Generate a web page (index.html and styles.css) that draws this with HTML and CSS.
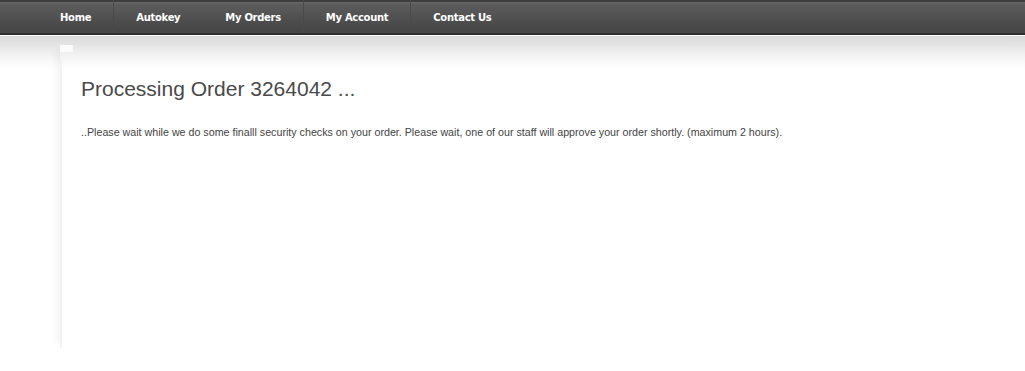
FILE: index.html
```html
<!DOCTYPE html>
<html>
<head>
<meta charset="utf-8">
<link rel="stylesheet" href="styles.css">
</head>
<body>
<div class="nav">
  <ul class="menu">
    <li class="item sep">Home</li>
    <li class="item">Autokey</li>
    <li class="item sep">My Orders</li>
    <li class="item sep">My Account</li>
    <li class="item">Contact Us</li>
  </ul>
</div>
<div class="page">
  <div class="content">
    <h1 class="title">Processing Order 3264042 ...</h1>
    <p class="msg">..Please wait while we do some finalll security checks on your order. Please wait, one of our staff will approve your order shortly. (maximum 2 hours).</p>
  </div>
</div>
</body>
</html>
```
FILE: styles.css
```css
html, body {
  margin: 0;
  padding: 0;
  background: #ffffff;
}
body {
  width: 1025px;
  height: 371px;
  overflow: hidden;
}
.nav {
  height: 33px;
  background: linear-gradient(#3c3c3c 0, #3c3c3c 2px, #6a6a6a 2px, #5c5c5c 4px, #4e4e4e 20px, #454545 33px);
  border-bottom: 2px solid #2e2e2e;
  box-shadow: 0 1px 0 #ffffff;
}
.menu {
  list-style: none;
  margin: 0;
  padding: 0 0 0 38px;
  display: flex;
  height: 33px;
  align-items: stretch;
}
.item {
  padding: 0 22px;
  display: flex;
  align-items: center;
  padding-top: 1px;
  color: #ffffff;
  font-family: "DejaVu Sans", Verdana, sans-serif;
  font-weight: bold;
  font-size: 10px;
  letter-spacing: -0.3px;
  border-right: 1px solid transparent;
}
.item.sep {
  border-right: 1px solid #4a4a4a;
}
.page {
  margin-top: 1px;
  height: 336px;
  background: linear-gradient(#d9d9d9 0, #e6e6e6 10px, #f3f3f3 20px, #fafafa 27px, #ffffff 34px);
  padding-left: 60px;
  padding-top: 9px;
  box-sizing: border-box;
}
.content {
  position: relative;
  height: 303px;
  border-left: 2px solid #f2f2f2;
  box-shadow: -6px 0 8px -4px rgba(0,0,0,0.06);
  padding-left: 19px;
}
.content::before {
  content: "";
  position: absolute;
  left: -2px;
  top: 0;
  width: 13px;
  height: 7px;
  background: #fbfbfb;
}
.title {
  margin: 0;
  padding-top: 31px;
  font-family: "Liberation Sans", Arial, sans-serif;
  font-weight: normal;
  font-size: 21px;
  color: #4a4a4a;
  line-height: 26px;
}
.msg {
  margin: 24px 0 0 0;
  font-family: "Liberation Sans", Arial, sans-serif;
  font-size: 10.7px;
  color: #444444;
}
```
